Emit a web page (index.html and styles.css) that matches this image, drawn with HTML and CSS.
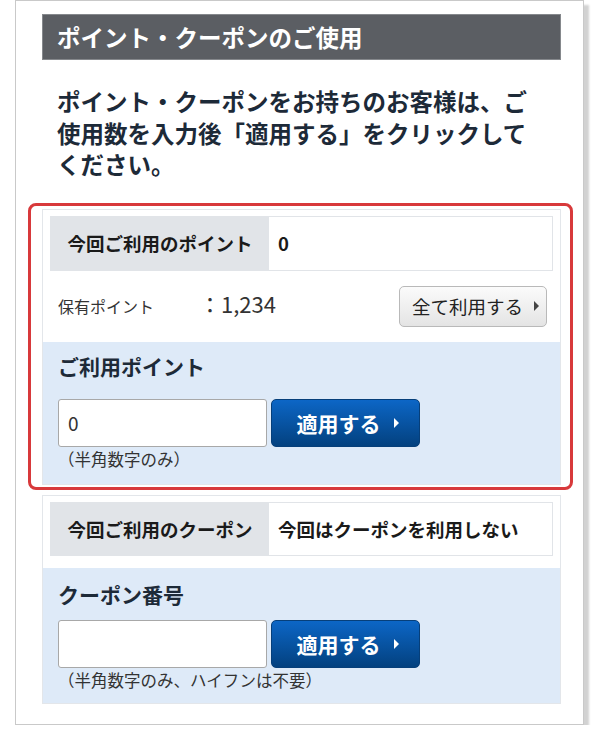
FILE: index.html
```html
<!DOCTYPE html>
<html lang="ja">
<head>
    <meta charset="UTF-8">
    <meta name="viewport" content="width=device-width, initial-scale=1.0">
    <title>ポイント・クーポンのご使用</title>
    <link rel="stylesheet" href="styles.css">
</head>
<body>
    <div class="card">
        <h2 class="card-title">ポイント・クーポンのご使用</h2>
        <p class="intro">
            ポイント・クーポンをお持ちのお客様は、ご<br>
            使用数を入力後「適用する」をクリックして<br>
            ください。
        </p>

        <div class="highlight">
            <div class="panel">
                <div class="summary">
                    <div class="summary-label">今回ご利用のポイント</div>
                    <div class="summary-value">0</div>
                </div>
                <div class="held">
                    <span class="held-label">保有ポイント</span>
                    <span class="held-value">：1,234</span>
                    <button class="btn-sub">全て利用する</button>
                </div>
                <div class="entry">
                    <h3 class="entry-title">ご利用ポイント</h3>
                    <div class="entry-row entry-row-wide">
                        <input class="entry-input" type="text" value="0">
                        <button class="btn-apply">適用する</button>
                    </div>
                    <p class="entry-note">（半角数字のみ）</p>
                </div>
            </div>
        </div>

        <div class="panel panel-coupon">
            <div class="summary">
                <div class="summary-label">今回ご利用のクーポン</div>
                <div class="summary-value">今回はクーポンを利用しない</div>
            </div>
            <div class="entry entry-coupon">
                <h3 class="entry-title">クーポン番号</h3>
                <div class="entry-row">
                    <input class="entry-input" type="text" value="">
                    <button class="btn-apply">適用する</button>
                </div>
                <p class="entry-note">（半角数字のみ、ハイフンは不要）</p>
            </div>
        </div>
    </div>
</body>
</html>
```

FILE: styles.css
```css
* {
    margin: 0;
    padding: 0;
    box-sizing: border-box;
}

body {
    font-family: "Noto Sans CJK JP", "Noto Sans", sans-serif;
    background: #fff;
    color: #222;
}

.card {
    width: 569px;
    margin-left: 15px;
    padding: 13px 22px 20px 26px;
    background: #fff;
    border: 1px solid #c9c9c9;
    box-shadow: 5px 5px 2px #d2d2d2;
}

.card-title {
    height: 46px;
    padding-left: 14px;
    display: flex;
    align-items: center;
    background: #5b5e63;
    border: 1px solid #85888c;
    color: #fff;
    font-size: 23.5px;
    font-weight: bold;
}

.intro {
    margin: 26px 0 22px 15px;
    font-size: 23.5px;
    line-height: 31.5px;
    font-weight: bold;
    color: #1d2a38;
}

.highlight {
    margin: 0 -12px 0 -14px;
    padding: 3px 9px 2px 11px;
    border: 3px solid #d8393b;
    border-radius: 8px;
}

.panel {
    border: 1px solid #e3e6ea;
    background: #fff;
}

.panel-coupon {
    margin-top: 5px;
}

.summary {
    display: grid;
    grid-template-columns: 218px 1fr;
    height: 55px;
    margin: 6px 7px 0;
    border: 1px solid #e1e4e8;
    font-size: 18.5px;
    font-weight: bold;
    color: #1a1a1a;
}

.panel-coupon .summary {
    height: 54px;
}

.summary-label {
    display: flex;
    align-items: center;
    justify-content: center;
    background: #e1e4e8;
}

.summary-value {
    display: flex;
    align-items: center;
    padding-left: 9px;
}

.held {
    display: flex;
    align-items: center;
    padding: 15px 13px 15px 15px;
    color: #333;
}

.held-label {
    width: 141px;
    font-size: 16px;
}

.held-value {
    flex: 1;
    font-size: 22px;
    margin-top: -6px;
}

.btn-sub {
    display: flex;
    align-items: center;
    gap: 11px;
    width: 148px;
    height: 41px;
    padding-left: 12px;
    border: 1px solid #b9b9b9;
    border-radius: 5px;
    background: linear-gradient(#fbfbfb, #e4e4e4);
    font-family: inherit;
    font-size: 18.5px;
    color: #222;
}

.btn-sub::after,
.btn-apply::after {
    content: "";
    border-left: 5px solid currentColor;
    border-top: 5px solid transparent;
    border-bottom: 5px solid transparent;
}

.btn-sub::after {
    color: #444;
}

.entry {
    padding: 10px 15px 14px;
    background: #deeaf8;
}

.entry-coupon {
    margin-top: 12px;
    padding: 12px 15px 12px;
}

.entry-title {
    font-size: 21px;
    line-height: 28px;
    font-weight: bold;
    color: #1d2a38;
}

.entry-row {
    display: flex;
    gap: 4px;
    margin-top: 12px;
}

.entry-row-wide {
    margin-top: 19px;
}

.entry-input {
    width: 209px;
    height: 48px;
    padding-left: 9px;
    border: 1px solid #a8a8a8;
    border-radius: 3px;
    background: #fff;
    font-family: inherit;
    font-size: 19px;
    color: #333;
}

.btn-apply {
    display: flex;
    align-items: center;
    justify-content: center;
    gap: 13px;
    width: 149px;
    height: 48px;
    padding-left: 4px;
    border: 1px solid #063f7a;
    border-radius: 5px;
    background: linear-gradient(#0c66c6, #03417f);
    font-family: inherit;
    font-size: 21px;
    font-weight: bold;
    color: #fff;
}

.entry-note {
    margin-top: 1px;
    font-size: 16.5px;
    line-height: 22px;
    color: #333;
}
```
